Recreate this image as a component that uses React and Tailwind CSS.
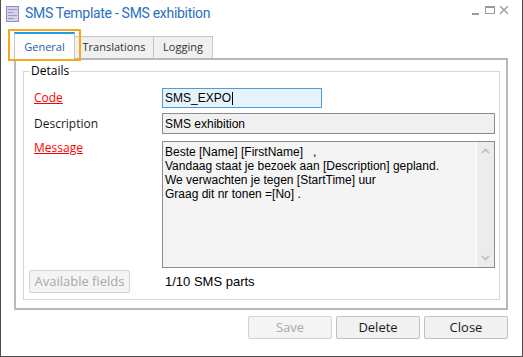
import React from "react";

const ui = { fontFamily: '"Open Sans", "Noto Sans", sans-serif' };
const tt = { fontFamily: 'Roboto, "Open Sans", sans-serif' };
const tx = { fontFamily: '"Liberation Sans", Arial, sans-serif' };

function DocIcon() {
  return (
    <div className="w-[13px] h-[16px] shrink-0">
      <svg width="13" height="16" viewBox="0 0 13 16" className="block w-[13px] h-[16px]">
        <rect x="0.5" y="0.5" width="12" height="15" fill="#d4d4e8" stroke="#8f8fb8" />
        <rect x="2" y="3" width="9" height="1" fill="#9a9ac0" />
        <rect x="2" y="6" width="6" height="1" fill="#9a9ac0" />
        <rect x="2" y="9" width="9" height="1" fill="#9a9ac0" />
        <rect x="2" y="12" width="6" height="1" fill="#9a9ac0" />
      </svg>
    </div>
  );
}

function Controls() {
  return (
    <svg width="40" height="12" viewBox="0 0 40 12" className="block shrink-0">
      <rect x="0" y="7" width="7" height="2" fill="#9a9a9a" />
      <rect x="13.5" y="0.5" width="9" height="7" fill="none" stroke="#9a9a9a" />
      <rect x="13.5" y="0.5" width="9" height="1.5" fill="#9a9a9a" />
      <path d="M28 0 L36 8 M36 0 L28 8" stroke="#9a9a9a" strokeWidth="1.4" />
    </svg>
  );
}

function Btn({ children, disabled, className = "" }) {
  return (
    <div
      className={`flex items-center justify-center border rounded-[2px] text-[13px] ${
        disabled
          ? "border-[#d3d3d3] bg-[#f4f4f4] text-[#a8a8a8]"
          : "border-[#c2c2c2] bg-[#f1f1f1] text-[#1a1a1a]"
      } ${className}`}
      style={ui}
    >
      {children}
    </div>
  );
}

export default function App() {
  return (
    <div className="w-[523px] h-[357px] bg-white border-x border-b border-[#4d4d4d] relative flex flex-col overflow-hidden">
      {/* title bar */}
      <div className="h-[28px] flex items-center pl-[5px] pr-[10px] shrink-0">
        <DocIcon />
        <span className="ml-[6px] text-[14px] tracking-[-0.3px] text-[#2b6fc0] leading-none -mt-[2px]" style={tt}>
          SMS Template - SMS exhibition
        </span>
        <div className="ml-auto -mt-[4px]">
          <Controls />
        </div>
      </div>

      {/* tabs */}
      <div className="flex items-end ml-[13px] h-[30px] shrink-0 relative z-10">
        <div
          className="w-[61px] h-[28px] bg-white border-x border-[#c6c6c6] border-t-2 border-t-[#1e9be8] flex items-center justify-center text-[11px] text-[#2a5aa8] -mb-[2px]"
          style={ui}
        >
          General
        </div>
        <div
          className="w-[79px] h-[22px] bg-[#f0f0f0] border-t border-r border-[#c6c6c6] flex items-center justify-center text-[11px] text-[#333]"
          style={ui}
        >
          Translations
        </div>
        <div
          className="w-[59px] h-[22px] bg-[#f0f0f0] border-t border-r border-[#c6c6c6] flex items-center justify-center text-[11px] text-[#333]"
          style={ui}
        >
          Logging
        </div>
      </div>

      {/* panel */}
      <div className="ml-[13px] w-[494px] h-[252px] border-2 border-[#b9b9b9] pt-[11px] pl-[7px] pr-[6px] shrink-0">
        <div className="relative h-[229px] border border-[#d6d6d6] flex flex-col">
          <span className="absolute left-[6px] -top-[9px] bg-white px-[1px] text-[12px] text-black leading-[16px]" style={ui}>
            Details
          </span>
          <div className="flex items-center mt-[16px]">
            <span className="w-[138px] pl-[10px] text-[12px] text-[#ff0000] underline" style={ui}>
              Code
            </span>
            <div className="w-[160px] h-[20px] border border-[#4f9de0] bg-[#e6f3fb] flex items-center pl-[2px] text-[12px] text-black" style={tx}>
              SMS_EXPO<span className="w-px h-[13px] bg-black ml-px" />
            </div>
          </div>
          <div className="flex items-center mt-[5px]">
            <span className="w-[138px] pl-[10px] text-[12px] text-[#1a1a1a]" style={ui}>
              Description
            </span>
            <div className="w-[333px] h-[21px] border border-[#8c8c8c] bg-[#f0f0f0] flex items-center pl-[2px] text-[12px] text-black" style={tx}>
              SMS exhibition
            </div>
          </div>
          <div className="flex items-start mt-[7px]">
            <span className="w-[138px] pl-[10px] text-[12px] text-[#ff0000] underline leading-[16px] mt-[-1px]" style={ui}>
              Message
            </span>
            <div className="w-[333px] h-[127px] border border-[#8c8c8c] bg-[#f4f4f4] flex">
              <div className="flex-1 pl-[2px] pt-[3px] text-[12px] leading-[14px] text-black whitespace-pre" style={tx}>
                {"Beste [Name] [FirstName]   ,\nVandaag staat je bezoek aan [Description] gepland.\nWe verwachten je tegen [StartTime] uur\nGraag dit nr tonen =[No] ."}
              </div>
              <div className="w-[18px] h-full bg-[#ececec] border-l border-white flex flex-col items-center justify-between py-[6px]">
                <svg width="9" height="6" viewBox="0 0 9 6">
                  <path d="M1 5 L4.5 1.5 L8 5" fill="none" stroke="#bdbdbd" strokeWidth="1.6" />
                </svg>
                <svg width="9" height="6" viewBox="0 0 9 6">
                  <path d="M1 1 L4.5 4.5 L8 1" fill="none" stroke="#bdbdbd" strokeWidth="1.6" />
                </svg>
              </div>
            </div>
          </div>
          <div className="flex items-center mt-[2px]">
            <Btn disabled className="ml-[5px] w-[101px] h-[23px] text-[12px]">
              Available fields
            </Btn>
            <span className="ml-[35px] text-[13px] text-black" style={tx}>
              1/10 SMS parts
            </span>
          </div>
        </div>
      </div>

      {/* bottom buttons */}
      <div className="flex justify-end gap-[4px] mt-[6px] mr-[14px]">
        <Btn disabled className="w-[84px] h-[23px]">Save</Btn>
        <Btn className="w-[84px] h-[23px]">Delete</Btn>
        <Btn className="w-[84px] h-[23px]">Close</Btn>
      </div>

      {/* focus highlight */}
      <div className="absolute left-[7px] top-[29px] w-[73px] h-[32px] border-2 border-[#f5a81c] pointer-events-none z-20" />
    </div>
  );
}
